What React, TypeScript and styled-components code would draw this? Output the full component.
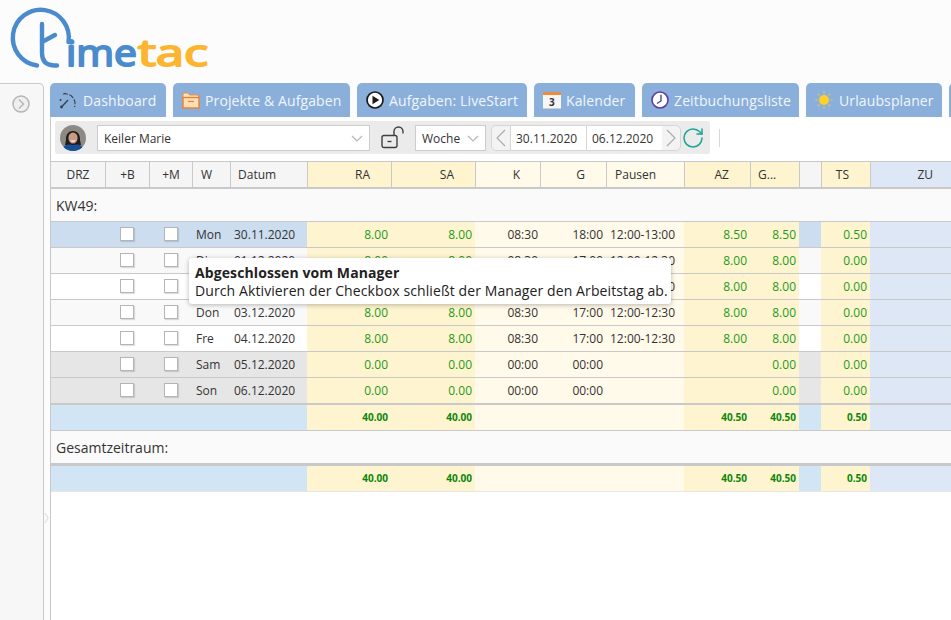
import React, { FC } from "react";
import styled, { createGlobalStyle } from "styled-components";
import { RotateCw } from "lucide-react";

const GlobalStyle = createGlobalStyle`
  html, body {
    margin: 0;
    padding: 0;
    height: 620px;
    overflow: hidden;
    background: #fcfcfc;
    font-family: "Open Sans", "Liberation Sans", sans-serif;
    color: #333;
  }
`;

const COLUMNS =
  "54px 44px 43px 38px 77px 84px 84px 65px 66px 78px 66px 49px 22px 49px 120px";
const LINE = "#c9c9c9";

type Tone = "plain" | "yellow" | "cream" | "blue" | "row" | "sum";

const toneColor = (tone: Tone, rowColor: string) => {
  if (tone === "yellow") return "#fef5d0";
  if (tone === "cream") return "#fffaea";
  if (tone === "blue") return "#dee7f6";
  if (tone === "sum") return "#d2e5f5";
  if (tone === "plain") return "#f5f5f5";
  return rowColor;
};

const Page = styled.div`
  width: 951px;
  height: 620px;
  display: flex;
  flex-direction: column;
  overflow: hidden;
`;
const LogoBar = styled.header`
  height: 83px;
  flex-shrink: 0;
`;
const Body = styled.div`
  flex: 1;
  display: flex;
  min-height: 0;
`;
const Sidebar = styled.aside`
  position: relative;
  width: 44px;
  flex-shrink: 0;
  box-sizing: border-box;
  background: #f7f7f7;
  border: 1px solid ${LINE};
  border-width: 1px 1px 0 0;
  border-top-right-radius: 5px;
  padding: 11px 0 0 12px;
`;
const SidebarHandle = styled.svg`
  position: absolute;
  right: -6px;
  top: 428px;
`;
const Main = styled.main`
  flex: 1;
  margin-left: 6px;
  min-width: 0;
  display: flex;
  flex-direction: column;
  overflow: hidden;
`;
const Tabs = styled.nav`
  height: 34px;
  flex-shrink: 0;
  display: flex;
  gap: 7px;
`;
const Tab = styled.div<{ $width: number }>`
  flex: 0 0 ${(p) => p.$width}px;
  display: flex;
  align-items: center;
  gap: 5px;
  padding-left: 9px;
  box-sizing: border-box;
  background: #8aafdb;
  border-radius: 5px 5px 0 0;
  color: #f1f6fc;
  font-size: 14px;
  white-space: nowrap;
  letter-spacing: 0.12px;
`;
const Panel = styled.section`
  flex: 1;
  background: #fff;
  border-left: 1px solid ${LINE};
  min-height: 0;
`;
const ToolbarRow = styled.div`
  display: flex;
  align-items: center;
  padding: 4px 0 7px 4px;
`;
const Toolbar = styled.div`
  width: 655px;
  height: 33px;
  box-sizing: border-box;
  display: flex;
  align-items: center;
  background: #ebebeb;
  border-radius: 3px;
  padding-left: 5px;
`;
const Separator = styled.div`
  width: 1px;
  height: 18px;
  margin-left: 9px;
  background: #d8d8d8;
`;
const Avatar = styled.svg`
  flex-shrink: 0;
  border-radius: 50%;
`;
const Select = styled.div<{ $width: number; $gap: number }>`
  width: ${(p) => p.$width}px;
  height: 26px;
  margin-left: ${(p) => p.$gap}px;
  box-sizing: border-box;
  display: flex;
  align-items: center;
  justify-content: space-between;
  padding: 1px 6px 0;
  background: #fff;
  border: 1px solid #ccc;
  font-size: 12px;
  color: #333;
`;
const LockIcon = styled.svg`
  margin-left: 11px;
  flex-shrink: 0;
`;
const DateGroup = styled.div`
  margin-left: 5px;
  height: 26px;
  display: flex;
  background: #f3f3f3;
  border: 1px solid #d6d6d6;
  border-radius: 5px;
  box-sizing: border-box;
`;
const Arrow = styled.div`
  width: 18px;
  display: flex;
  align-items: center;
  justify-content: center;
`;
const DateField = styled.div`
  width: 76px;
  box-sizing: border-box;
  display: flex;
  align-items: center;
  padding: 1px 0 0 5px;
  background: #fff;
  border-left: 1px solid #d6d6d6;
  font-size: 12px;
  color: #333;
  &:last-of-type {
    border-right: 1px solid #d6d6d6;
  }
`;
const Refresh = styled(RotateCw)`
  flex-shrink: 0;
`;
const Table = styled.div`
  position: relative;
  width: 920px;
`;
const HeaderRow = styled.div`
  display: grid;
  grid-template-columns: ${COLUMNS};
  height: 28px;
  box-sizing: border-box;
  border-top: 1px solid ${LINE};
  border-bottom: 2px solid ${LINE};
`;
const HeaderCell = styled.div<{ $tone: Tone; $align: string; $pad: number }>`
  background: ${(p) => toneColor(p.$tone, "#f5f5f5")};
  border-left: 1px solid ${LINE};
  font-size: 12px;
  line-height: 25px;
  color: #333;
  text-align: ${(p) => p.$align};
  padding: ${(p) => (p.$align === "right" ? `0 ${p.$pad}px 0 0` : `0 0 0 ${p.$pad}px`)};
  overflow: hidden;
  white-space: nowrap;
  &:first-child {
    border-left: 0;
  }
`;
const SectionRow = styled.div<{ $height: number; $thick?: boolean }>`
  height: ${(p) => p.$height}px;
  box-sizing: border-box;
  background: #fafafa;
  border-bottom: ${(p) => (p.$thick ? 3 : 1)}px solid ${LINE};
  padding-left: 5px;
  display: flex;
  align-items: center;
  font-size: 14px;
  color: #333;
`;
const DayRow = styled.div<{ $last?: boolean }>`
  display: grid;
  grid-template-columns: ${COLUMNS};
  height: ${(p) => (p.$last ? 27 : 26)}px;
  box-sizing: border-box;
  border-bottom: ${(p) => (p.$last ? 2 : 1)}px solid ${LINE};
`;
const SumRow = styled.div<{ $soft?: boolean }>`
  display: grid;
  grid-template-columns: ${COLUMNS};
  height: 26px;
  box-sizing: border-box;
  border-bottom: 1px solid ${(p) => (p.$soft ? "#e6e6e6" : LINE)};
`;
const Cell = styled.div<{ $tone: Tone; $row?: string; $value?: boolean }>`
  background: ${(p) => toneColor(p.$tone, p.$row ?? "#fff")};
  font-size: 12px;
  line-height: 25px;
  padding: 0 3px 0 4px;
  color: ${(p) => (p.$value ? "#1c9a1c" : "#333")};
  text-align: ${(p) => (p.$value ? "right" : "left")};
  white-space: nowrap;
  overflow: hidden;
`;
const TimeCell = styled(Cell)`
  text-align: right;
`;
const ComeCell = styled(TimeCell)`
  padding-right: 2px;
`;
const BoxCell = styled(Cell)`
  display: flex;
  align-items: center;
  justify-content: center;
  padding: 0 0 1px;
`;
const Checkbox = styled.span`
  width: 14px;
  height: 14px;
  box-sizing: border-box;
  background: #fff;
  border: 1px solid #b5b5b5;
  box-shadow: 1px 1px 1px rgba(0, 0, 0, 0.12);
`;
const LeftFill = styled.div`
  grid-column: span 5;
  background: #d2e5f5;
`;
const SumCell = styled.div<{ $tone: Tone }>`
  background: ${(p) => toneColor(p.$tone, "#fff")};
  font-size: 10px;
  font-weight: 700;
  line-height: 25px;
  text-align: right;
  padding-right: 3px;
  color: #0b860b;
`;
const Tooltip = styled.div`
  position: absolute;
  left: 138px;
  top: 97px;
  width: 482px;
  height: 46px;
  box-sizing: border-box;
  padding: 6px 6px;
  background: #fff;
  border-radius: 3px;
  box-shadow: 0 1px 5px rgba(0, 0, 0, 0.28);
  font-size: 14px;
  line-height: 18px;
  letter-spacing: 0.1px;
  color: #222;
  white-space: nowrap;
`;
const TooltipTitle = styled.div`
  font-weight: 700;
`;

const Logo: FC = () => (
  <svg width="220" height="83" viewBox="0 0 220 83">
    <g fill="none" stroke="#4a8bcd" strokeWidth="4.4" strokeLinecap="round">
      <path d="M37 65.5 A28 28 0 1 1 68.5 42" />
      <path d="M42 24 V53 Q42 65 54 65.5 H57" />
      <path d="M42 42 L55 35" />
    </g>
    <text
      x="66"
      y="66"
      fontFamily="'Open Sans', sans-serif"
      fontSize="37"
      fill="#4a8bcd"
      stroke="#4a8bcd"
      strokeWidth="1.9"
      strokeLinejoin="round"
      textLength="71"
      lengthAdjust="spacingAndGlyphs"
    >
      ime
    </text>
    <text
      x="138"
      y="66"
      fontFamily="'Open Sans', sans-serif"
      fontSize="37"
      fill="#fdb42e"
      stroke="#fdb42e"
      strokeWidth="1.9"
      strokeLinejoin="round"
      textLength="70"
      lengthAdjust="spacingAndGlyphs"
    >
      tac
    </text>
  </svg>
);

const DashboardIcon: FC = () => (
  <svg width="19" height="18" viewBox="0 0 19 18" fill="none" stroke="#3a3f48">
    <path d="M4 3 A10 10 0 0 1 15.5 16" strokeWidth="1.1" strokeDasharray="5 1.5" />
    <path d="M2.5 16 L9 9" strokeWidth="1.3" />
    <circle cx="6" cy="2.5" r="0.8" fill="#3a3f48" stroke="none" />
    <circle cx="1.5" cy="9" r="1" fill="#3a3f48" stroke="none" />
    <circle cx="2.5" cy="16" r="1.4" fill="#3a3f48" stroke="none" />
  </svg>
);

const FolderIcon: FC = () => (
  <svg width="18" height="18" viewBox="0 0 18 18" fill="none">
    <path d="M1 2 H6 L7.5 4 H16.5 V7 H1 Z" fill="#fbe7c6" stroke="#ef8a36" />
    <rect x="1" y="6.5" width="16" height="10.5" fill="#fde0b8" stroke="#ef7f2d" strokeWidth="1.4" />
    <path d="M6 10.5 H12" stroke="#ef7f2d" strokeWidth="1.2" />
  </svg>
);

const PlayIcon: FC = () => (
  <svg width="18" height="18" viewBox="0 0 18 18">
    <circle cx="9" cy="9" r="8" fill="#fff" stroke="#1b1b1b" strokeWidth="1.7" />
    <path d="M6.5 4.8 L13.3 9 L6.5 13.2 Z" fill="#1b1b1b" />
  </svg>
);

const CalendarBox = styled.div`
  width: 18px;
  height: 17px;
  box-sizing: border-box;
  background: #f6f6f6;
  border-top: 3px solid #ee8a3c;
  border-bottom: 1px solid #cfcfcf;
  font-size: 10px;
  font-weight: 700;
  line-height: 14px;
  text-align: center;
  color: #333;
`;

const ClockIcon: FC = () => (
  <svg width="18" height="18" viewBox="0 0 18 18" fill="none">
    <circle cx="9" cy="9" r="8" fill="#fff" stroke="#5b3ea6" strokeWidth="1.6" />
    <path d="M10 3.8 V10 L6 12.5" stroke="#463a78" strokeWidth="1.3" />
  </svg>
);

const SunIcon: FC = () => (
  <svg width="19" height="18" viewBox="0 0 19 18" fill="none">
    <circle cx="9" cy="9" r="5" fill="#fdd02a" />
    <path
      d="M9 0.5 V2.5 M9 15.5 V17.5 M0.5 9 H2.5 M15.5 9 H17.5 M3 3 L4.4 4.4 M13.6 13.6 L15 15 M15 3 L13.6 4.4 M4.4 13.6 L3 15"
      stroke="#f6c93c"
      strokeWidth="1.1"
    />
  </svg>
);

const Caret: FC = () => (
  <svg width="12" height="7" viewBox="0 0 12 7" fill="none" stroke="#b5b5b5" strokeWidth="1.1">
    <path d="M1 1 L6 6 L11 1" />
  </svg>
);

const ArrowIcon: FC<{ flip?: boolean }> = ({ flip }) => (
  <svg width="10" height="18" viewBox="0 0 10 18" fill="none" stroke="#a9a9a9" strokeWidth="1.1">
    <path d={flip ? "M1 1 L9 9 L1 17" : "M9 1 L1 9 L9 17"} />
  </svg>
);

const TABS: { label: string; width: number; icon: React.ReactNode }[] = [
  { label: "Dashboard", width: 116, icon: <DashboardIcon /> },
  { label: "Projekte & Aufgaben", width: 177, icon: <FolderIcon /> },
  { label: "Aufgaben: LiveStart", width: 170, icon: <PlayIcon /> },
  { label: "Kalender", width: 101, icon: <CalendarBox>3</CalendarBox> },
  { label: "Zeitbuchungsliste", width: 157, icon: <ClockIcon /> },
  { label: "Urlaubsplaner", width: 136, icon: <SunIcon /> },
  { label: "", width: 40, icon: null },
];

const HEADERS: { label: string; tone: Tone; align: string; pad: number }[] = [
  { label: "DRZ", tone: "plain", align: "center", pad: 0 },
  { label: "+B", tone: "plain", align: "center", pad: 0 },
  { label: "+M", tone: "plain", align: "center", pad: 0 },
  { label: "W", tone: "plain", align: "left", pad: 8 },
  { label: "Datum", tone: "plain", align: "left", pad: 7 },
  { label: "RA", tone: "yellow", align: "right", pad: 21 },
  { label: "SA", tone: "yellow", align: "right", pad: 21 },
  { label: "K", tone: "cream", align: "right", pad: 20 },
  { label: "G", tone: "cream", align: "right", pad: 21 },
  { label: "Pausen", tone: "cream", align: "left", pad: 8 },
  { label: "AZ", tone: "yellow", align: "right", pad: 21 },
  { label: "G...", tone: "yellow", align: "left", pad: 7 },
  { label: "", tone: "plain", align: "left", pad: 0 },
  { label: "TS", tone: "yellow", align: "right", pad: 21 },
  { label: "ZU", tone: "blue", align: "right", pad: 57 },
];

const DAYS = [
  { w: "Mon", date: "30.11.2020", ra: "8.00", sa: "8.00", k: "08:30", g: "18:00", p: "12:00-13:00", az: "8.50", gs: "8.50", ts: "0.50", color: "#ccddf0" },
  { w: "Die", date: "01.12.2020", ra: "8.00", sa: "8.00", k: "08:30", g: "17:00", p: "12:00-12:30", az: "8.00", gs: "8.00", ts: "0.00", color: "#f9f9f9" },
  { w: "Mit", date: "02.12.2020", ra: "8.00", sa: "8.00", k: "08:30", g: "17:00", p: "12:00-12:30", az: "8.00", gs: "8.00", ts: "0.00", color: "#ffffff" },
  { w: "Don", date: "03.12.2020", ra: "8.00", sa: "8.00", k: "08:30", g: "17:00", p: "12:00-12:30", az: "8.00", gs: "8.00", ts: "0.00", color: "#f9f9f9" },
  { w: "Fre", date: "04.12.2020", ra: "8.00", sa: "8.00", k: "08:30", g: "17:00", p: "12:00-12:30", az: "8.00", gs: "8.00", ts: "0.00", color: "#ffffff" },
  { w: "Sam", date: "05.12.2020", ra: "0.00", sa: "0.00", k: "00:00", g: "00:00", p: "", az: "", gs: "0.00", ts: "0.00", color: "#e6e6e6" },
  { w: "Son", date: "06.12.2020", ra: "0.00", sa: "0.00", k: "00:00", g: "00:00", p: "", az: "", gs: "0.00", ts: "0.00", color: "#e6e6e6" },
];

const Totals: FC<{ soft?: boolean }> = ({ soft }) => (
  <SumRow $soft={soft}>
    <LeftFill />
    <SumCell $tone="yellow">40.00</SumCell>
    <SumCell $tone="yellow">40.00</SumCell>
    <SumCell $tone="cream" />
    <SumCell $tone="cream" />
    <SumCell $tone="cream" />
    <SumCell $tone="yellow">40.50</SumCell>
    <SumCell $tone="yellow">40.50</SumCell>
    <SumCell $tone="sum" />
    <SumCell $tone="yellow">0.50</SumCell>
    <SumCell $tone="blue" />
  </SumRow>
);

export default function App() {
  return (
    <Page>
      <GlobalStyle />
      <LogoBar>
        <Logo />
      </LogoBar>
      <Body>
        <Sidebar>
          <svg width="18" height="18" viewBox="0 0 18 18" fill="none">
            <circle cx="9" cy="9" r="8" fill="#efefef" stroke="#b5b5b5" strokeWidth="1.5" />
            <path d="M7 4.5 L11.5 9 L7 13.5" stroke="#b0b0b0" strokeWidth="1.2" />
          </svg>
          <SidebarHandle width="5" height="12" viewBox="0 0 5 12" fill="none">
            <path d="M1 1 L4 6 L1 11" stroke="#dedede" strokeWidth="1.2" />
          </SidebarHandle>
        </Sidebar>
        <Main>
          <Tabs>
            {TABS.map((tab, i) => (
              <Tab key={i} $width={tab.width}>
                {tab.icon}
                {tab.label}
              </Tab>
            ))}
          </Tabs>
          <Panel>
            <ToolbarRow>
              <Toolbar>
                <Avatar width="26" height="26" viewBox="0 0 26 26">
                  <rect width="26" height="26" fill="#8d8a86" />
                  <path d="M6 15 C5 3 21 3 20 15 L21 20 H5 Z" fill="#211c1a" />
                  <ellipse cx="13" cy="13" rx="4.6" ry="5.6" fill="#c99a84" />
                  <path d="M10 15.5 Q13 18 16 15.5 Z" fill="#fff" />
                  <path d="M2 26 C3 19 9 19 13 20 C17 19 23 19 24 26 Z" fill="#164f96" />
                </Avatar>
                <Select $width={273} $gap={11}>
                  Keiler Marie
                  <Caret />
                </Select>
                <LockIcon width="24" height="23" viewBox="0 0 24 23" fill="none" stroke="#3f3f3f">
                  <rect x="1" y="9.5" width="15" height="12" rx="2" strokeWidth="1.4" />
                  <path d="M6.5 15.5 H10.5" strokeWidth="1.4" />
                  <path d="M13 9 V5.5 A4.5 4.5 0 0 1 22 5.5 V7.5" strokeWidth="1.4" />
                </LockIcon>
                <Select $width={71} $gap={10}>
                  Woche
                  <Caret />
                </Select>
                <DateGroup>
                  <Arrow>
                    <ArrowIcon />
                  </Arrow>
                  <DateField>30.11.2020</DateField>
                  <DateField>06.12.2020</DateField>
                  <Arrow>
                    <ArrowIcon flip />
                  </Arrow>
                </DateGroup>
                <Refresh size={24} color="#1fa393" strokeWidth={1.5} />
              </Toolbar>
              <Separator />
            </ToolbarRow>
            <Table>
              <HeaderRow>
                {HEADERS.map((h, i) => (
                  <HeaderCell key={i} $tone={h.tone} $align={h.align} $pad={h.pad}>
                    {h.label}
                  </HeaderCell>
                ))}
              </HeaderRow>
              <SectionRow $height={33}>KW49:</SectionRow>
              {DAYS.map((day, i) => (
                <DayRow key={day.date} $last={i === DAYS.length - 1}>
                  <Cell $tone="row" $row={day.color} />
                  <BoxCell $tone="row" $row={day.color}>
                    <Checkbox />
                  </BoxCell>
                  <BoxCell $tone="row" $row={day.color}>
                    <Checkbox />
                  </BoxCell>
                  <Cell $tone="row" $row={day.color}>{day.w}</Cell>
                  <Cell $tone="row" $row={day.color}>{day.date}</Cell>
                  <Cell $tone="yellow" $value>{day.ra}</Cell>
                  <Cell $tone="yellow" $value>{day.sa}</Cell>
                  <ComeCell $tone="cream">{day.k}</ComeCell>
                  <TimeCell $tone="cream">{day.g}</TimeCell>
                  <Cell $tone="cream">{day.p}</Cell>
                  <Cell $tone="yellow" $value>{day.az}</Cell>
                  <Cell $tone="yellow" $value>{day.gs}</Cell>
                  <Cell $tone="row" $row={day.color} />
                  <Cell $tone="yellow" $value>{day.ts}</Cell>
                  <Cell $tone="blue" />
                </DayRow>
              ))}
              <Totals />
              <SectionRow $height={35} $thick>
                Gesamtzeitraum:
              </SectionRow>
              <Totals soft />
              <Tooltip>
                <TooltipTitle>Abgeschlossen vom Manager</TooltipTitle>
                Durch Aktivieren der Checkbox schließt der Manager den Arbeitstag ab.
              </Tooltip>
            </Table>
          </Panel>
        </Main>
      </Body>
    </Page>
  );
}
